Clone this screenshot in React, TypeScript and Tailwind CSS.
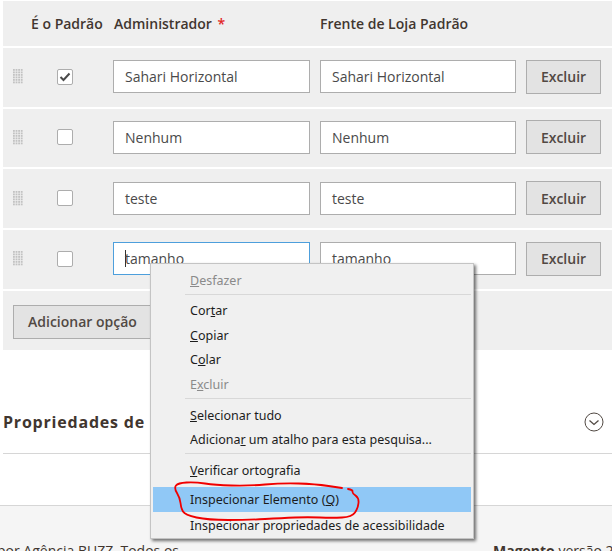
import { Fragment } from 'react';

const options = ['Sahari Horizontal', 'Nenhum', 'teste', 'tamanho'];

const Grip = () => (
  <svg width="10" height="15" viewBox="0 0 10 15" className="shrink-0">
    {[0, 1, 2, 3].map((col) =>
      [0, 1, 2, 3, 4, 5].map((row) => (
        <rect key={`${col}-${row}`} x={col * 2.6} y={row * 2.5} width="1.8" height="1.8" fill="#c2c2c2" />
      ))
    )}
  </svg>
);

const Field = ({ value, width, focused }: { value: string; width: string; focused?: boolean }) => (
  <div
    className={`h-[33px] ${width} shrink-0 flex items-center bg-white border pl-[11px] text-[14px] text-[#4a4a4a] ${
      focused ? 'border-[#4d9fdc]' : 'border-[#adadad]'
    }`}
  >
    {focused && <span className="w-px h-[17px] -mr-px bg-[#333]" />}
    {value}
  </div>
);

const ExcludeButton = () => (
  <div className="ml-[10px] w-[75px] h-[34px] shrink-0 flex items-center justify-center bg-[#e3e3e3] border border-[#adadad] text-[14px] font-semibold text-[#514943]">
    Excluir
  </div>
);

type MenuEntry = { before: string; hotkey: string; after: string; disabled?: boolean };

const menuGroups: MenuEntry[][] = [
  [{ before: '', hotkey: 'D', after: 'esfazer', disabled: true }],
  [
    { before: 'Cor', hotkey: 't', after: 'ar' },
    { before: '', hotkey: 'C', after: 'opiar' },
    { before: 'C', hotkey: 'o', after: 'lar' },
    { before: 'E', hotkey: 'x', after: 'cluir', disabled: true },
  ],
  [
    { before: '', hotkey: 'S', after: 'elecionar tudo' },
    { before: 'Adiciona', hotkey: 'r', after: ' um atalho para esta pesquisa...' },
  ],
  [{ before: '', hotkey: 'V', after: 'erificar ortografia' }],
];

// spacing around each separator is not even in the screenshot
const separatorSpacing = ['', 'mt-[0.5px] mb-[4px]', 'mt-px mb-[4.5px]', 'mt-0 mb-[4.5px]'];

const MenuItem = ({ before, hotkey, after, disabled }: MenuEntry) => (
  <div className={`h-[24.6px] flex items-center pl-[39px] whitespace-pre ${disabled ? 'text-[#8a8a8a]' : 'text-[#1c1c1c]'}`}>
    <span>
      {before}
      <u>{hotkey}</u>
      {after}
    </span>
  </div>
);

const ContextMenu = () => (
  <div className="absolute left-[150px] top-[263px] w-[324px] h-[276px] bg-[#f0f0f0] border border-[#c4c4c4] shadow-[2px_2px_3px_rgba(0,0,0,0.55)] pt-[5px] text-[12.5px] font-['Noto_Sans',sans-serif]">
    {menuGroups.map((group, i) => (
      <Fragment key={i}>
        {i > 0 && <div className={`h-px ml-[34px] mr-[2px] bg-[#d8d8d8] ${separatorSpacing[i]}`} />}
        {group.map((item) => (
          <MenuItem key={item.before + item.after} {...item} />
        ))}
      </Fragment>
    ))}
    <div className="h-[24.5px] mx-[2px] mt-[4px] pt-[2px] bg-[#90c8f6] flex items-center pl-[37px] text-[#1c1c1c]">
      <span>
        Inspecionar Elemento (<u>Q</u>)
      </span>
    </div>
    <div className="h-[24.5px] mt-[2px] flex items-center pl-[39px] text-[#1c1c1c]">Inspecionar propriedades de acessibilidade</div>
  </div>
);

// hand-drawn circle around the highlighted menu item
const scribblePoints = [
  [348, 489], [353, 490], [352, 493], [359, 498], [358, 508], [352, 517], [332, 518], [308, 517],
  [282, 518], [248, 520], [208, 520], [185, 515], [181, 508], [180, 498], [174, 488], [178, 483],
  [195, 482], [215, 485], [248, 486], [282, 483], [315, 484], [342, 488],
];

const scribblePath = scribblePoints.reduce((d, [x, y], i, pts) => {
  if (i === 0) return `M${x} ${y}`;
  if (i === pts.length - 1) return `${d} L${x} ${y}`;
  const [nx, ny] = pts[i + 1];
  return `${d} Q${x} ${y} ${(x + nx) / 2} ${(y + ny) / 2}`;
}, '');

const Scribble = () => (
  <svg className="absolute left-0 top-0 pointer-events-none" width="612" height="558" viewBox="0 0 612 558" fill="none">
    <path d={scribblePath} stroke="#f00000" strokeWidth="1.8" strokeLinecap="round" />
  </svg>
);

export default function App() {
  return (
    <div className="relative w-[612px] h-[551px] overflow-hidden bg-white font-['Open_Sans',sans-serif]">
      {/* Options table */}
      <div className="ml-[3px] mt-px h-[349px] bg-[#efefef]">
        <div className="h-[45px] flex items-center text-[14px] font-semibold text-[#41362f]">
          <span className="ml-[28px] w-[83px]">É o Padrão</span>
          <span className="w-[206px]">
            Administrador <span className="ml-[2px] text-[#e22626]">*</span>
          </span>
          <span>Frente de Loja Padrão</span>
        </div>
        {options.map((option, i) => (
          <div key={option} className="h-[60.67px] border-t-2 border-white pb-px flex items-center pl-[10px]">
            <Grip />
            <div className="ml-[34px] w-[16px] h-[16px] shrink-0 bg-white border border-[#adadad] rounded-[2px] flex items-center justify-center">
              {i === 0 && (
                <svg width="12" height="10" viewBox="0 0 12 10" fill="none">
                  <path d="M1.5 5 L4.5 8 L10.5 1.5" stroke="#4a4a4a" strokeWidth="2" />
                </svg>
              )}
            </div>
            <div className="ml-[40px]">
              <Field value={option} width="w-[197px]" focused={i === 3} />
            </div>
            <div className="ml-[10px]">
              <Field value={option} width="w-[196px]" />
            </div>
            <ExcludeButton />
          </div>
        ))}
        <div className="border-t-2 border-white pl-[10px] pt-[14px]">
          <div className="w-[150px] h-[34px] flex items-center pl-[14px] bg-[#e3e3e3] border border-[#adadad] text-[14px] font-semibold text-[#514943]">
            Adicionar opção
          </div>
        </div>
      </div>

      {/* Collapsed section */}
      <div className="ml-[3px] mt-[52px] h-[52px] border-b border-[#d6d6d6] flex items-start justify-between pr-[8px]">
        <h2 className="text-[16px] leading-[40px] font-bold tracking-[0.8px] text-[#41362f]">Propriedades de</h2>
        <svg className="mt-[10px]" width="20" height="20" viewBox="0 0 20 20" fill="none" stroke="#514943">
          <circle cx="10" cy="10" r="9" />
          <path d="M5.5 8.5 L10 12.5 L14.5 8.5" strokeWidth="1.3" />
        </svg>
      </div>

      {/* Footer, cut by the bottom of the picture */}
      <div className="mt-[51px] h-[46px] overflow-hidden bg-[#f5f5f5] border-t border-[#d6d6d6] flex pt-[34px] text-[14px] text-[#41362f] -ml-[3px] w-[615px] whitespace-nowrap">
        <span className="w-[496px] shrink-0">por Agência BUZZ. Todos os</span>
        <span>
          <b>Magento</b> versão 2.3
        </span>
      </div>

      <ContextMenu />
      <Scribble />
    </div>
  );
}
